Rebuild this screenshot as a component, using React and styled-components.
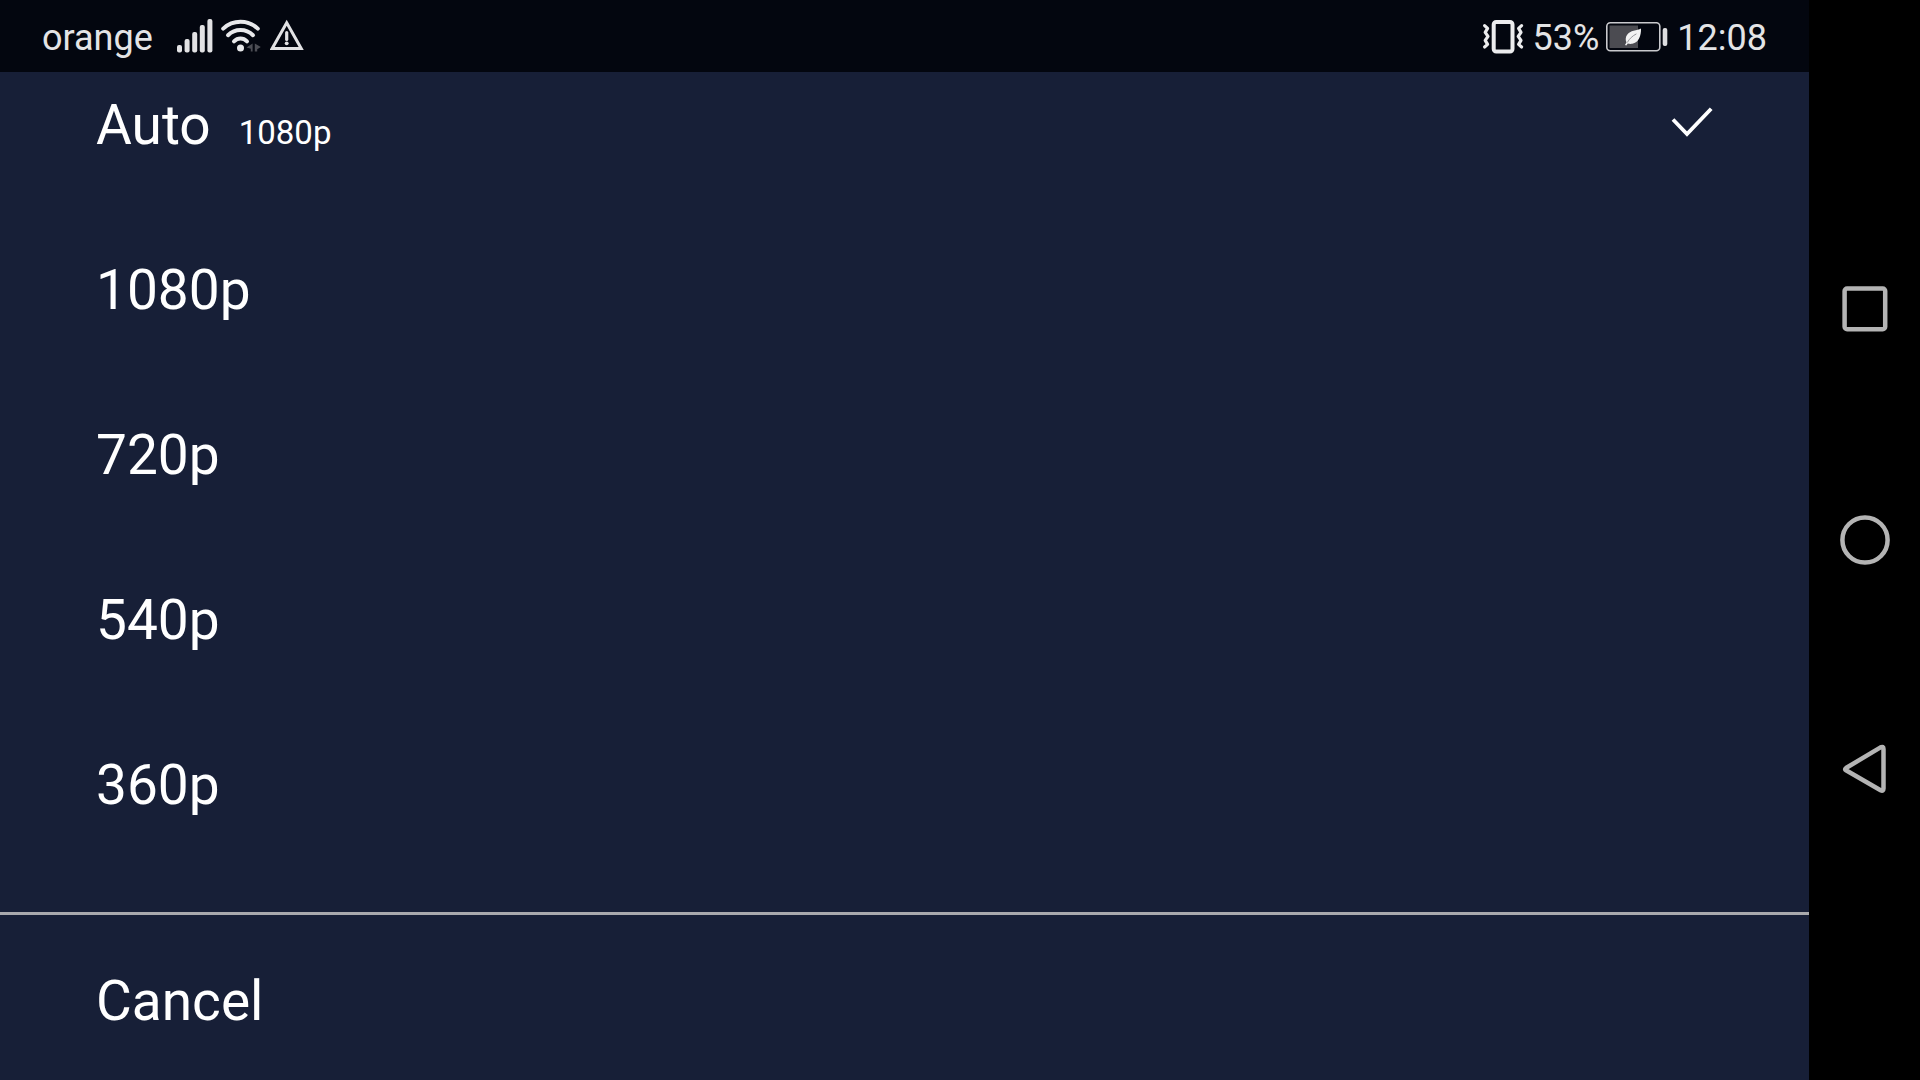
import { useState } from "react";
import styled, { createGlobalStyle } from "styled-components";

const OPTIONS = [
  { value: "auto", label: "Auto", note: "1080p" },
  { value: "1080p", label: "1080p" },
  { value: "720p", label: "720p" },
  { value: "540p", label: "540p" },
  { value: "360p", label: "360p" },
];

const SignalIcon = () => (
  <Icon width="36" height="40" viewBox="0 0 36 40" aria-hidden="true">
    <g fill="#e2e2e4">
      <rect x="0" y="29" width="5" height="7.5" rx="2" />
      <rect x="7.6" y="23" width="5" height="13.5" rx="2" />
      <rect x="15.2" y="16" width="5" height="20.5" rx="2" />
      <rect x="22.8" y="9" width="5" height="27.5" rx="2" />
      <rect x="30.4" y="3" width="5" height="33.5" rx="2" />
    </g>
  </Icon>
);

const WifiIcon = () => (
  <Icon width="41" height="40" viewBox="0 0 41 40" aria-hidden="true">
    <g fill="none" stroke="#e8e8ea" strokeWidth="4" strokeLinecap="round">
      <path d="M2.2 12.6C12 3.6 27 3.6 36.800 12.600" />
      <path d="M7 19.200C14 12.400 25 12.400 32 19.200" />
      <path d="M13 25.400C16.800 21.600 22.200 21.600 26 25.400" />
    </g>
    <circle cx="19.500" cy="32" r="3.500" fill="#e8e8ea" />
    <path d="M31.600 27.500v8h-1.800v-2.700l-4.300-1.300zM33.800 27.500l6 3.600-3.600 2.200v2.200h-2.400z" fill="#4c4d54" />
  </Icon>
);

const WarningIcon = () => (
  <Icon width="34" height="40" viewBox="0 0 34 40" aria-hidden="true">
    <path d="M16.700 6.800L31.200 32.400H2.200z" fill="none" stroke="#e2e2e4" strokeWidth="3" />
    <path d="M16.700 16.500v7" stroke="#e2e2e4" strokeWidth="3.200" strokeLinecap="round" />
    <circle cx="16.700" cy="27.300" r="1.900" fill="#e2e2e4" />
  </Icon>
);

const VibrateIcon = () => (
  <Icon width="44" height="40" viewBox="0 0 44 40" aria-hidden="true">
    <g fill="none" stroke="#ececee">
      <rect x="11.700" y="6" width="18.800" height="29.600" rx="2.500" strokeWidth="4" />
      <g strokeWidth="3.200" strokeLinejoin="round" strokeLinecap="round">
        <path d="M2.600 9.600l3 2.800-2.400 4 2.800 4-2.800 4 2.400 4-3 2.600" />
        <path d="M39.600 9.600l-3 2.800 2.400 4-2.800 4 2.800 4-2.400 4 3 2.600" />
      </g>
    </g>
  </Icon>
);

const BatteryIcon = () => (
  <Icon width="62" height="40" viewBox="0 0 62 40" aria-hidden="true">
    <rect x="0.800" y="6.800" width="53" height="28" rx="3.500" fill="none" stroke="#c9c9cd" strokeWidth="1.600" />
    <rect x="3.500" y="9.500" width="28.500" height="22.500" fill="#4b4b51" />
    <rect x="56.700" y="12" width="4.600" height="18" rx="2" fill="#dedee0" />
    <path
      d="M35 12.600C35.300 20 32.500 26.800 26.300 27.800C24.600 28.100 23 27.900 21.800 27.500L20.300 29.500L19 28.900L20.400 26.400C18 20.500 22.500 15.800 27.600 14.800C30.600 14.200 33 13.800 35 12.600z"
      fill="#f2f2f2"
    />
    <path d="M21.300 26.500C23.500 22.600 26.600 19.800 30.400 17.900" fill="none" stroke="#8b8b90" strokeWidth="0.900" />
  </Icon>
);

const CheckIcon = () => (
  <Icon width="44" height="44" viewBox="0 0 44 44" aria-hidden="true">
    <path d="M4 15.500L18 30L42.200 4.800" fill="none" stroke="#fff" strokeWidth="3.800" />
  </Icon>
);

const App = () => {
  const [quality, setQuality] = useState("auto");

  return (
    <>
      <GlobalStyle />
      <Screen>
        <Content>
          <StatusBar>
            <StatusText>orange</StatusText>
            <StatusIcons>
              <SignalIcon />
              <WifiIcon />
              <WarningIcon />
            </StatusIcons>
            <StatusEnd>
              <VibrateIcon />
              <StatusText>53%</StatusText>
              <BatteryIcon />
              <Clock>12:08</Clock>
            </StatusEnd>
          </StatusBar>
          <OptionList role="radiogroup" aria-label="Video quality">
            {OPTIONS.map(({ value, label, note }) => (
              <Option key={value}>
                <Radio
                  type="radio"
                  name="quality"
                  value={value}
                  checked={quality === value}
                  onChange={() => setQuality(value)}
                />
                <span>{label}</span>
                {note && <Note>{note}</Note>}
                {quality === value && (
                  <Check>
                    <CheckIcon />
                  </Check>
                )}
              </Option>
            ))}
          </OptionList>
          <CancelButton type="button">Cancel</CancelButton>
        </Content>
        <NavBar aria-label="System">
          <NavButton type="button" aria-label="Recent apps">
            <Icon width="52" height="52" viewBox="0 0 52 52">
              <rect x="5.600" y="4.600" width="40.600" height="40.600" rx="2.500" />
            </Icon>
          </NavButton>
          <NavButton type="button" aria-label="Home">
            <Icon width="52" height="52" viewBox="0 0 52 52">
              <circle cx="26" cy="26" r="22.600" />
            </Icon>
          </NavButton>
          <NavButton type="button" aria-label="Back">
            <Icon width="52" height="52" viewBox="0 0 52 52">
              <path d="M7 24L41.500 3.400Q44.500 2 44.500 5V44.500Q44.500 47.600 41.500 46.200L7 26.300Q5.200 25.200 7 24z" />
            </Icon>
          </NavButton>
        </NavBar>
      </Screen>
    </>
  );
};

export default App;

const GlobalStyle = createGlobalStyle`
  * {
    box-sizing: border-box;
  }

  body {
    margin: 0;
    background: #000;
    font-family: Roboto, "Liberation Sans", sans-serif;
  }
`;

const Icon = styled.svg`
  display: block;
  flex-shrink: 0;
`;

const Screen = styled.div`
  display: flex;
  height: 100vh;
`;

const Content = styled.main`
  flex: 1;
  min-width: 0;
  display: flex;
  flex-direction: column;
  background: #171f37;
  color: #fff;
`;

const StatusBar = styled.header`
  display: flex;
  align-items: center;
  flex-shrink: 0;
  height: 72px;
  padding: 0 42px;
  background: #03060f;
  color: #e4e4e6;
`;

const StatusText = styled.span`
  padding-top: 4px;
  font-size: 36px;
  line-height: 40px;
`;

const StatusIcons = styled.div`
  display: flex;
  gap: 8px;
  margin-left: 24px;
`;

const StatusEnd = styled.div`
  display: flex;
  align-items: center;
  gap: 7px;
  margin-left: auto;
`;

const Clock = styled(StatusText)`
  margin-left: 2px;
`;

const OptionList = styled.div`
  flex: 1;
  min-height: 0;
  display: flex;
  flex-direction: column;
  justify-content: flex-end;
  padding-bottom: 44px;
  border-bottom: 3px solid #a9a9ad;
  overflow: hidden;
`;

const Option = styled.label`
  display: flex;
  align-items: baseline;
  flex-shrink: 0;
  height: 165px;
  padding: 0 96px;
  font-size: 55px;
  line-height: 165px;
  cursor: pointer;
`;

const Radio = styled.input`
  appearance: none;
  width: 0;
  height: 0;
  margin: 0;
`;

const Note = styled.span`
  margin-left: 28px;
  font-size: 33px;
`;

const Check = styled.span`
  align-self: center;
  margin-left: auto;
`;

const CancelButton = styled.button`
  flex-shrink: 0;
  height: 165px;
  padding: 6px 96px 0;
  border: 0;
  background: none;
  color: inherit;
  font-family: inherit;
  font-size: 55px;
  text-align: left;
  cursor: pointer;
`;

const NavBar = styled.nav`
  display: flex;
  flex-direction: column;
  justify-content: center;
  flex-shrink: 0;
  width: 111px;
  background: #000;
`;

const NavButton = styled.button`
  display: flex;
  align-items: center;
  justify-content: center;
  height: 230px;
  padding: 0;
  border: 0;
  background: none;
  cursor: pointer;

  svg {
    fill: none;
    stroke: #b4b4b4;
    stroke-width: 4.5;
  }
`;
